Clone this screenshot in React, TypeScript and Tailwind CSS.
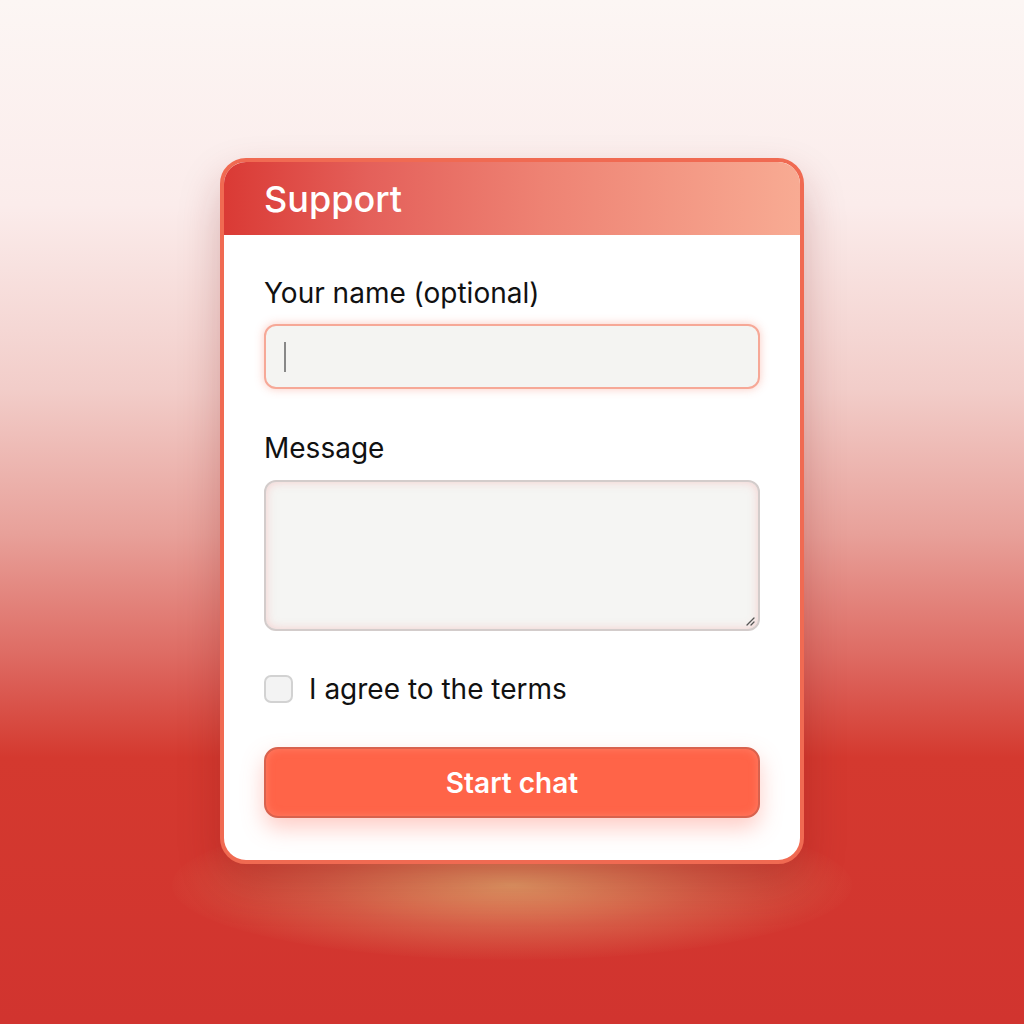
import React from 'react';

export default function App() {
  return (
    <div
      className="relative flex h-[1024px] w-full justify-center overflow-hidden pt-[158px] bg-[linear-gradient(180deg,#fcf6f4_0%,#fbeceb_20%,#f2cdc9_38%,#e8a19a_52%,#de6b63_64%,#d4392f_74%,#d1342f_100%)]"
      style={{ fontFamily: 'Inter, "Noto Sans", sans-serif' }}
    >
      <div className="absolute left-1/2 top-[810px] h-[150px] w-[680px] -translate-x-1/2 rounded-[50%] bg-[radial-gradient(ellipse_at_center,rgba(228,172,112,0.85)_0%,rgba(220,140,100,0.45)_40%,rgba(210,60,50,0)_72%)]" />
      <SupportCard />
    </div>
  );
}

const SupportCard: React.FC = () => (
  <div className="relative h-[706px] w-[584px] overflow-hidden rounded-[26px] border-4 border-[#f06a52] bg-white shadow-[0_20px_40px_rgba(120,20,20,0.25)]">
    <div className="flex h-[73px] items-center bg-[linear-gradient(90deg,#da3a35_0%,#e4605a_25%,#ee8273_55%,#f8ab93_100%)] px-10">
      <h1 className="text-[36px] font-medium leading-none text-white">Support</h1>
    </div>

    <div className="flex flex-col px-10 pt-[42px] text-[#111]">
      <label className="text-[28px] leading-[32px]">Your name (optional)</label>
      <div className="mt-[15px] flex h-[65px] items-center rounded-[12px] border-2 border-[#f6a897] bg-[#f4f4f2] px-[18px] shadow-[0_0_10px_rgba(246,140,120,0.45)]">
        <div className="h-[30px] w-[2px] bg-[#888]" />
      </div>

      <label className="mt-[43px] text-[28px] leading-[32px]">Message</label>
      <div className="relative mt-[16px] h-[151px] rounded-[12px] border-2 border-[#d3cccb] bg-[#f5f5f3] shadow-[inset_0_0_10px_rgba(245,170,170,0.5)]">
        <svg className="absolute bottom-[3px] right-[3px]" width="10" height="10" viewBox="0 0 10 10">
          <path d="M9 2 L2 9 M9 6 L6 9" stroke="#555" strokeWidth="1.3" strokeLinecap="round" />
        </svg>
      </div>

      <div className="mt-[42px] flex items-center gap-4">
        <div className="h-[28px] w-[29px] rounded-[7px] border-2 border-[#d2d2d2] bg-[#f3f3f3]" />
        <span className="text-[28px] leading-[32px]">I agree to the terms</span>
      </div>

      <button className="mt-[42px] flex h-[71px] items-center justify-center rounded-[14px] border-2 border-[#d8624e] bg-[#ff6448] text-[28px] font-semibold text-white shadow-[0_10px_22px_rgba(255,110,90,0.35),inset_0_0_8px_rgba(255,150,130,0.5)]">
        Start chat
      </button>
    </div>
  </div>
);
